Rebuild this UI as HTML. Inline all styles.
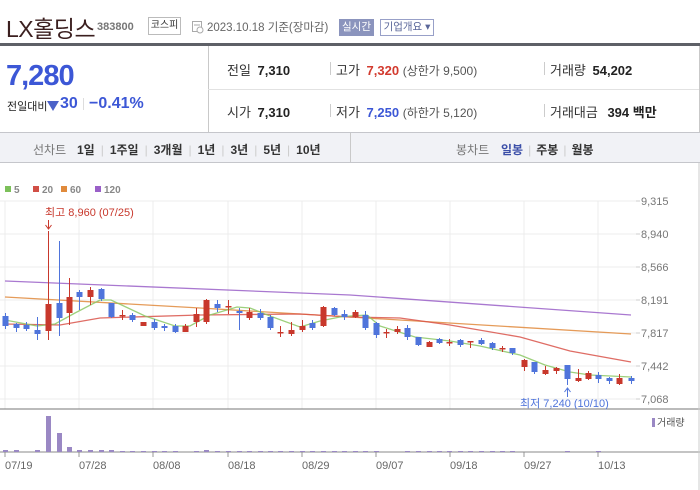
<!DOCTYPE html>
<html><head><meta charset="utf-8">
<style>
*{margin:0;padding:0;box-sizing:border-box}
body{width:700px;height:490px;background:#fff;font-family:"Liberation Sans","Noto Sans CJK KR",sans-serif;position:relative;overflow:hidden;color:#222}
.a{position:absolute;white-space:nowrap}
</style></head><body>
<div class="a" style="left:6px;top:10px;font-size:23px;color:#3b1f1f;letter-spacing:-0.5px">LX홀딩스</div>
<div class="a" style="left:97px;top:21px;font-size:11px;font-weight:bold;color:#777">383800</div>
<div class="a" style="left:148px;top:17px;width:33px;height:18px;border:1px solid #bbb;font-size:10px;line-height:16px;text-align:center;color:#333">코스피</div>
<svg class="a" style="left:192px;top:21px" width="12" height="13"><rect x="0.5" y="0.5" width="9" height="10" fill="none" stroke="#aaa"/><line x1="2" y1="4" x2="8" y2="4" stroke="#aaa"/><circle cx="8" cy="9" r="3" fill="#fff" stroke="#aaa"/></svg>
<div class="a" style="left:207px;top:19px;font-size:11.5px;color:#666">2023.10.18 기준(장마감)</div>
<div class="a" style="left:339px;top:19px;width:35px;height:17px;background:#8b94bd;color:#fff;font-size:10.5px;line-height:17px;text-align:center">실시간</div>
<div class="a" style="left:380px;top:19px;width:54px;height:17px;border:1px solid #98a0c8;color:#5a6699;font-size:10.5px;line-height:15px;text-align:center">기업개요 ▾</div>
<div class="a" style="left:0;top:43px;width:700px;height:3px;background:#5e6067"></div>
<div class="a" style="left:208px;top:46px;width:1px;height:86px;background:#c9c9c9"></div>
<div class="a" style="left:208px;top:89px;width:491px;height:1px;background:#e2e2e2"></div>
<div class="a" style="left:699px;top:46px;width:1px;height:117px;background:#c9c9c9"></div>
<div class="a" style="left:6px;top:60px;font-size:29px;font-weight:bold;color:#3c57d6;letter-spacing:-1px">7,280</div>
<div class="a" style="left:7px;top:98px;font-size:11px;color:#222">전일대비</div>
<svg class="a" style="left:47px;top:101px" width="12" height="11"><polygon points="0,0 12,0 6,10" fill="#4c62c8"/></svg>
<div class="a" style="left:60px;top:95px;font-size:16px;font-weight:bold;color:#3c57d6">30</div>
<div class="a" style="left:83px;top:98px;width:1px;height:12px;background:#ddd"></div>
<div class="a" style="left:89px;top:95px;font-size:16px;font-weight:bold;color:#3c57d6">−0.41%</div>
<div class="a" style="left:227px;top:60px;font-size:13px;color:#333">전일 <b style="margin-left:3px;color:#222">7,310</b></div>
<div class="a" style="left:330px;top:62px;width:1px;height:13px;background:#ccc"></div>
<div class="a" style="left:336px;top:60px;font-size:13px;color:#333">고가 <b style="margin-left:3px;color:#d23a2e">7,320</b> <span style="font-size:12px;color:#555">(상한가 9,500)</span></div>
<div class="a" style="left:544px;top:62px;width:1px;height:13px;background:#ccc"></div>
<div class="a" style="left:550px;top:60px;font-size:13px;color:#333">거래량 <b style="margin-left:3px;color:#222">54,202</b></div>
<div class="a" style="left:227px;top:102px;font-size:13px;color:#333">시가 <b style="margin-left:3px;color:#222">7,310</b></div>
<div class="a" style="left:330px;top:104px;width:1px;height:13px;background:#ccc"></div>
<div class="a" style="left:336px;top:102px;font-size:13px;color:#333">저가 <b style="margin-left:3px;color:#3c57d6">7,250</b> <span style="font-size:12px;color:#555">(하한가 5,120)</span></div>
<div class="a" style="left:544px;top:104px;width:1px;height:13px;background:#ccc"></div>
<div class="a" style="left:550px;top:102px;font-size:13px;color:#333">거래대금 <b style="margin-left:6px;color:#222">394 백만</b></div>
<div class="a" style="left:0;top:132px;width:700px;height:31px;background:#f1f2f6;border-top:1px solid #c5c6cb;border-bottom:1px solid #c5c6cb"></div>
<div class="a" style="left:350px;top:133px;width:1px;height:29px;background:#c9c9c9"></div>
<div class="a" style="left:33px;top:141px;font-size:12px;color:#777">선차트</div>
<div class="a" style="left:77px;top:141px;font-size:12px;font-weight:bold;color:#333">1일<span style="color:#ccc;font-weight:normal;margin:0 6px">|</span>1주일<span style="color:#ccc;font-weight:normal;margin:0 6px">|</span>3개월<span style="color:#ccc;font-weight:normal;margin:0 6px">|</span>1년<span style="color:#ccc;font-weight:normal;margin:0 6px">|</span>3년<span style="color:#ccc;font-weight:normal;margin:0 6px">|</span>5년<span style="color:#ccc;font-weight:normal;margin:0 6px">|</span>10년</div>
<div class="a" style="left:456px;top:141px;font-size:12px;color:#777">봉차트</div>
<div class="a" style="left:501px;top:141px;font-size:12px;font-weight:bold;color:#333"><span style="color:#3c4fa8">일봉</span><span style="color:#ccc;font-weight:normal;margin:0 5px">|</span>주봉<span style="color:#ccc;font-weight:normal;margin:0 5px">|</span>월봉</div>
<svg class="a" id="ch" style="left:0;top:163px" width="700" height="327" viewBox="0 163 700 327"></svg>
<script>
var s='';
function L(x1,y1,x2,y2,c,w){s+='<line x1="'+x1+'" y1="'+y1+'" x2="'+x2+'" y2="'+y2+'" stroke="'+c+'" stroke-width="'+(w||1)+'"/>';}
function T(x,y,t,c,sz,a){s+='<text x="'+x+'" y="'+y+'" fill="'+c+'" font-size="'+sz+'" font-family="Liberation Sans,Noto Sans CJK KR,sans-serif"'+(a?' text-anchor="'+a+'"':'')+'>'+t+'</text>';}
[[5,'#7cc05a','5'],[33,'#d14f46','20'],[61,'#e08a3c','60'],[95,'#9a60c8','120']].forEach(function(l){s+='<rect x="'+l[0]+'" y="186" width="6" height="6" fill="'+l[1]+'"/>';s+='<text x="'+(l[0]+9)+'" y="193" fill="#888" font-size="10" font-weight="bold" font-family="Liberation Sans,sans-serif">'+l[2]+'</text>';});
var ys=[201,234,267,300,333,366,399],lb=['9,315','8,940','8,566','8,191','7,817','7,442','7,068'];
ys.forEach(function(y,i){L(0,y,636,y,'#ececec');L(636,y,640,y,'#ccc');T(641,y+4,lb[i],'#777',11);});
var xs=[5,79,153,228,302,376,450,524,598];
xs.forEach(function(x){L(x,201,x,409,'#ececec');L(x,452,x,457,'#999');});
var dl=['07/19','07/28','08/08','08/18','08/29','09/07','09/18','09/27','10/13'];
xs.forEach(function(x,i){T(x,469,dl[i],'#666',11);});
L(0,409,700,409,'#777');L(0,452,700,452,'#888');L(699,163,699,490,'#ccc');
function P(p,c,w){s+='<polyline points="'+p+'" fill="none" stroke="'+c+'" stroke-width="'+(w||1.3)+'" opacity="0.85"/>';}
P('5,281 350,295 631,315','#9a60c8');
P('5,297 200,308 350,317 631,334','#e08a3c');
P('5,324 60,325 100,318 200,315 300,314 350,317 400,318 450,325 520,337 570,351 631,362','#d9534a');
P('5,320 37,326 55,324 75,313 100,300 111,300 145,316 175,326 190,326 210,315 237,307 250,308 270,316 300,327 320,321 340,317 350,316 367,315 380,326 415,337 450,341 480,346 520,355 545,365 570,372 590,375 631,377','#8cc865');
var R='#c8382c',B='#4f74db';
var C=[[5,B,316,326,313,329],[16,B,324,328,323,332],[26,B,325,329,322,331],[37,B,330,334,317,340],[48,R,304,331,231,340],[59,B,303,318,241,336],[69,R,297,313,278,325],[79,B,292,297,290,310],[90,R,290,297,287,305],[101,B,289,299,288,301],[111,B,303,317,303,318],[122,R,315,316,310,320],[132,B,315,320,313,322],[143,R,322,326,322,326],[154,B,322,328,319,330],[164,B,326,328,324,331],[175,B,326,332,324,333],[185,R,326,332,324,332],[196,R,314,322,308,327],[206,R,300,322,299,324],[217,B,304,308,300,312],[228,R,306,307,300,314],[239,B,311,313,308,330],[249,R,312,318,308,320],[260,B,313,318,309,320],[270,B,317,328,315,330],[280,R,332,333,326,337],[291,R,330,334,322,336],[302,R,326,330,320,332],[312,B,323,328,320,330],[323,R,307,326,306,327],[334,B,308,315,307,316],[344,B,314,317,310,320],[355,R,312,317,310,318],[365,B,315,328,311,330],[376,B,323,335,322,338],[386,R,332,333,329,338],[397,R,329,332,326,334],[407,B,328,337,325,340],[418,B,337,345,337,346],[429,R,342,347,341,347],[439,B,339,343,338,344],[449,R,342,343,339,346],[460,B,340,345,339,347],[470,R,341,342,341,348],[481,B,340,344,338,345],[492,B,343,348,342,350],[502,R,348,349,346,352],[512,B,348,353,348,355],[524,R,360,367,359,371],[534,B,362,372,362,374],[545,R,370,374,366,375],[556,R,368,371,367,374],[567,B,365,379,365,385],[578,R,378,381,369,382],[588,R,373,379,371,380],[598,B,375,379,372,383],[609,B,378,381,377,384],[619,R,378,384,374,385],[631,B,378,381,376,384]];
C.forEach(function(c){L(c[0]+0.5,c[4],c[0]+0.5,c[5],c[1]);s+='<rect x="'+(c[0]-2.5)+'" y="'+c[2]+'" width="6" height="'+Math.max(1.5,c[3]-c[2])+'" fill="'+c[1]+'"/>';});
T(45,216,'최고 8,960 (07/25)','#c8382c',11);
L(48.5,220,48.5,229,'#c8382c');s+='<polyline points="45.5,225 48.5,229 51.5,225" fill="none" stroke="#c8382c"/>';
L(567.5,389,567.5,397,'#4f74db');s+='<polyline points="564.5,392 567.5,388 570.5,392" fill="none" stroke="#4f74db"/>';
T(520,407,'최저 7,240 (10/10)','#4f74db',11);
s+='<rect x="652" y="418" width="3" height="9" fill="#9a88c4"/>';T(657,426,'거래량','#555',10);
var V=[[5,2],[16,2],[37,2],[48,36],[59,19],[69,5],[79,2],[90,2],[101,2],[111,2],[122,1],[132,1],[143,1],[154,1],[164,1],[175,1],[196,1],[206,2],[217,1],[228,1],[239,1],[249,1],[260,1],[270,1],[280,1],[291,1],[302,1],[312,1],[323,1],[334,1],[344,1],[355,1],[365,1],[376,1],[407,1],[418,1],[429,1],[439,1],[449,1],[460,1],[470,1],[481,1],[492,1],[502,1],[512,1],[567,1],[598,1]];
V.forEach(function(v){s+='<rect x="'+(v[0]-2)+'" y="'+(452-v[1])+'" width="5" height="'+v[1]+'" fill="#9a88c4"/>';});
document.getElementById('ch').innerHTML=s;
</script>
</body></html>
